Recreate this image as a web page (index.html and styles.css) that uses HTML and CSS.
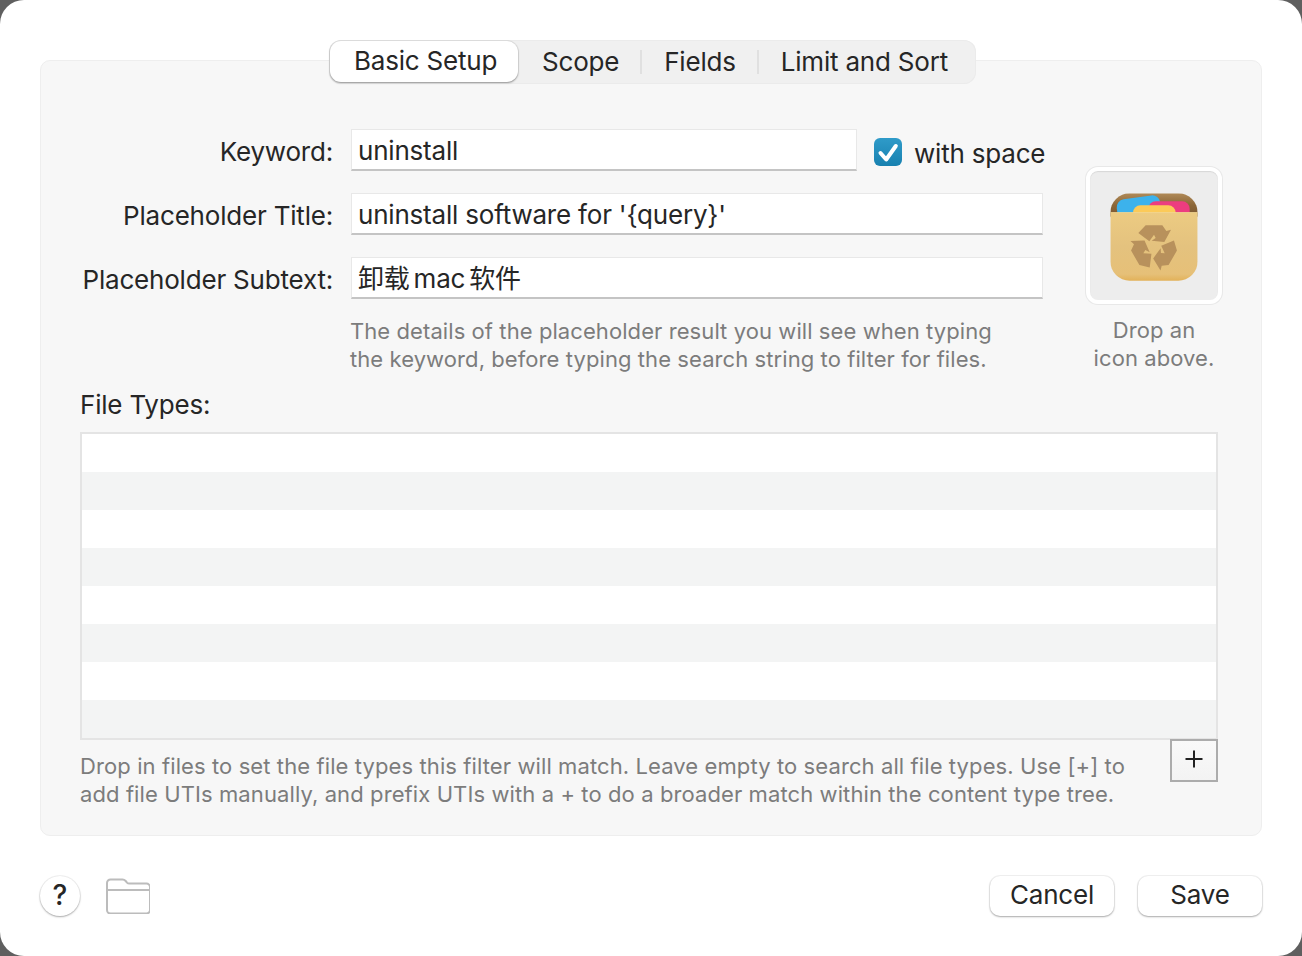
FILE: index.html
```html
<!DOCTYPE html>
<html lang="en">
<head>
<meta charset="utf-8">
<title>Basic Setup</title>
<link rel="stylesheet" href="styles.css">
</head>
<body>
<div class="window">
  <nav class="tabs">
    <div class="tab tab-active">Basic Setup</div>
    <div class="tab tab-scope">Scope</div>
    <div class="tab-sep"></div>
    <div class="tab tab-fields">Fields</div>
    <div class="tab-sep"></div>
    <div class="tab tab-limit">Limit and Sort</div>
  </nav>
  <section class="panel">
    <div class="top">
      <div class="form">
        <div class="row">
          <label class="label">Keyword:</label>
          <div class="input input-short">uninstall</div>
          <div class="check">
            <svg width="28" height="28" viewBox="0 0 28 28"><path d="M6.500 15l5.700 6.500L21.800 8" fill="none" stroke="#fff" stroke-width="4" stroke-linecap="round" stroke-linejoin="round"/></svg>
          </div>
          <span class="check-label">with space</span>
        </div>
        <div class="row">
          <label class="label">Placeholder Title:</label>
          <div class="input">uninstall software for '{query}'</div>
        </div>
        <div class="row">
          <label class="label">Placeholder Subtext:</label>
          <div class="input">卸载<span class="latin">mac</span>软件</div>
        </div>
        <p class="details">The details of the placeholder result you will see when typing<br>the keyword, before typing the search string to filter for files.</p>
      </div>
      <div class="icon-col">
        <div class="well">
          <svg width="88" height="89" viewBox="15 13 264 267">
            <defs>
              <clipPath id="clip-body"><rect x="16" y="14" width="262" height="262" rx="58"/></clipPath>
              <linearGradient id="grad-back" x1="0" y1="0" x2="0" y2="1"><stop offset="0" stop-color="#b08a58"/><stop offset=".5" stop-color="#8c6738"/><stop offset="1" stop-color="#7a5630"/></linearGradient>
              <linearGradient id="grad-front" x1="0" y1="0" x2="0" y2="1"><stop offset="0" stop-color="#eccb82"/><stop offset=".5" stop-color="#e4c27e"/><stop offset=".9" stop-color="#e6c078"/><stop offset="1" stop-color="#e2b158"/></linearGradient>
            </defs>
            <g clip-path="url(#clip-body)">
              <rect x="16" y="14" width="262" height="70" fill="url(#grad-back)"/>
              <rect x="36" y="26" width="132" height="70" rx="24" fill="#3cb2ec" transform="rotate(-8 100 60)"/>
              <rect x="130" y="38" width="124" height="60" rx="22" fill="#ec3d80"/>
              <rect x="84" y="50" width="128" height="50" rx="22" fill="#fcca58"/>
              <rect x="16" y="71" width="262" height="206" fill="url(#grad-front)"/>
              <rect x="16" y="71" width="262" height="2" fill="#f4d996"/>
            </g>
            <g fill="#b8915c">
              <path id="arrow" d="M100 133L122 110H172L184 127L198 123L178 160L140 156L152 148L147 138L133 158Z"/>
              <use href="#arrow" transform="rotate(120 147 175)"/>
              <use href="#arrow" transform="rotate(240 147 175)"/>
            </g>
          </svg>
        </div>
        <p class="drop">Drop an<br>icon above.</p>
      </div>
    </div>
    <div class="files">
      <div class="files-title">File Types:</div>
      <div class="table">
        <div class="tr"></div><div class="tr tr-alt"></div>
        <div class="tr"></div><div class="tr tr-alt"></div>
        <div class="tr"></div><div class="tr tr-alt"></div>
        <div class="tr"></div><div class="tr tr-alt"></div>
      </div>
      <div class="files-foot">
        <p class="hint">Drop in files to set the file types this filter will match. Leave empty to search all file types. Use [+] to<br>add file UTIs manually, and prefix UTIs with a + to do a broader match within the content type tree.</p>
        <div class="plus">
          <svg width="18" height="18" viewBox="0 0 18 18"><path d="M9 0.500v17M0.500 9h17" stroke="#222" stroke-width="2" fill="none"/></svg>
        </div>
      </div>
    </div>
  </section>
  <footer class="footer">
    <div class="help">?</div>
    <svg class="folder" width="44" height="36" viewBox="0 0 44 36"><path d="M1 5a3.500 3.500 0 0 1 3.500-3.500h12c1.500 0 2.300.5 3.200 1.500l1.300 1.600c.7.800 1.300 1 2.300 1h17.200a3.500 3.500 0 0 1 3.500 3.500v22.900a3.500 3.500 0 0 1-3.500 3.500h-36a3.500 3.500 0 0 1-3.500-3.500Z M1 12h42" fill="none" stroke="#bcbcbc" stroke-width="2"/></svg>
    <div class="spacer"></div>
    <div class="btn">Cancel</div>
    <div class="btn">Save</div>
  </footer>
</div>
</body>
</html>
```
FILE: styles.css
```css
* { box-sizing: border-box; }
html, body { margin: 0; padding: 0; }
body {
  width: 1302px;
  height: 956px;
  background: #5f5f5f;
  font-family: Inter, "Noto Sans CJK SC", sans-serif;
  color: #262626;
  overflow: hidden;
}
.window {
  width: 1302px;
  height: 956px;
  background: #fff;
  border-radius: 24px;
  padding: 40px 40px 0;
}
.tabs {
  position: relative;
  z-index: 1;
  display: flex;
  align-items: center;
  width: 647px;
  height: 44px;
  margin: 0 0 -24px 289px;
  padding: 1px 0 2px 1px;
  background: #f0f0f0;
  border-radius: 12px;
  box-shadow: inset 0 0 0 1px #ebebeb;
  font-size: 26px;
  letter-spacing: -0.2px;
}
.tab { white-space: nowrap; line-height: 38px; }
.tab-active {
  width: 188px;
  height: 41px;
  line-height: 40px;
  padding-left: 24px;
  background: #fff;
  border-radius: 11px;
  box-shadow: 0 1px 2px rgba(0,0,0,.35), 0 0 0 1px rgba(0,0,0,.05);
}
.tab-scope { margin-left: 24px; }
.tab-fields { margin-left: 22px; }
.tab-limit { margin-left: 22px; }
.tab-sep {
  width: 2px;
  height: 24px;
  margin-left: 21px;
  background: #e0e0e0;
}
.panel {
  height: 776px;
  background: #f7f7f7;
  border: 1px solid #eeeeee;
  border-radius: 10px;
}
.top {
  display: flex;
  padding-top: 68px;
}
.form { width: 1002px; flex: none; }
.row {
  display: flex;
  align-items: center;
  height: 42px;
  margin-bottom: 22px;
}
.label {
  width: 292px;
  padding-top: 2px;
  text-align: right;
  font-size: 26px;
  letter-spacing: -0.2px;
  white-space: nowrap;
  flex: none;
}
.input {
  width: 692px;
  height: 42px;
  margin-left: 18px;
  padding-left: 6px;
  line-height: 42px;
  background: #fff;
  border: 1px solid #e8e8e8;
  border-bottom: 2px solid #c4c4c4;
  font-size: 26px;
  letter-spacing: -0.2px;
  white-space: nowrap;
  flex: none;
}
.input-short { width: 506px; }
.latin { margin: 0 4px; }
.check {
  width: 28px;
  height: 28px;
  margin: 4px 0 0 17px;
  border-radius: 6px;
  background: linear-gradient(#2f9bc9, #1881b0);
  flex: none;
  line-height: 0;
}
.check-label {
  margin-left: 12px;
  font-size: 26px;
  letter-spacing: -0.2px;
  white-space: nowrap;
  padding-top: 6px;
}
.details {
  margin: -4px 0 0 309px;
  font-size: 22px;
  line-height: 28px;
  letter-spacing: 0.08px;
  color: #7c7c7c;
  white-space: nowrap;
}
.icon-col {
  width: 180px;
  margin-left: 21px;
  padding-top: 38px;
  display: flex;
  flex-direction: column;
  align-items: center;
  flex: none;
}
.well {
  width: 136px;
  height: 137px;
  padding-top: 3px;
  display: flex;
  align-items: center;
  justify-content: center;
  background: #ededed;
  border: 4px solid #fff;
  border-radius: 12px;
  box-shadow: 0 0 0 1px #e8e8e8, inset 0 1px 1px #d6d6d6;
}
.drop {
  margin: 12px 0 0;
  font-size: 22px;
  line-height: 28px;
  letter-spacing: 0.08px;
  color: #7c7c7c;
  text-align: center;
  white-space: nowrap;
}
.files { padding: 0 43px 0 39px; }
.files-title {
  height: 32px;
  margin-top: 16px;
  line-height: 32px;
  font-size: 26px;
  letter-spacing: -0.2px;
}
.table {
  margin-top: 11px;
  height: 308px;
  border: 2px solid #e4e4e4;
  background: #fff;
}
.tr { height: 38px; }
.tr-alt { background: #f3f4f4; }
.files-foot {
  display: flex;
  justify-content: space-between;
  align-items: flex-start;
}
.hint {
  margin: 12px 0 0;
  font-size: 22px;
  line-height: 28px;
  letter-spacing: 0.1px;
  color: #7c7c7c;
  white-space: nowrap;
}
.plus {
  width: 48px;
  height: 43px;
  margin-top: -1px;
  padding-bottom: 3px;
  display: flex;
  align-items: center;
  justify-content: center;
  border: 2px solid #acacac;
  background: linear-gradient(#f9f9f9, #f3f3f3);
  flex: none;
}
.footer {
  display: flex;
  align-items: center;
  height: 40px;
  margin-top: 40px;
}
.help {
  width: 40px;
  height: 40px;
  border-radius: 50%;
  background: #fff;
  box-shadow: 0 1px 2px rgba(0,0,0,.3), 0 0 0 1px rgba(0,0,0,.05);
  text-align: center;
  line-height: 39px;
  font-size: 28px;
  font-weight: 500;
}
.folder { margin-left: 26px; }
.spacer { flex: 1; }
.btn {
  width: 124px;
  height: 40px;
  margin-left: 24px;
  background: #fff;
  border-radius: 10px;
  box-shadow: 0 1px 2px rgba(0,0,0,.3), 0 0 0 1px rgba(0,0,0,.05);
  text-align: center;
  line-height: 38px;
  font-size: 26px;
  letter-spacing: -0.2px;
}
```
